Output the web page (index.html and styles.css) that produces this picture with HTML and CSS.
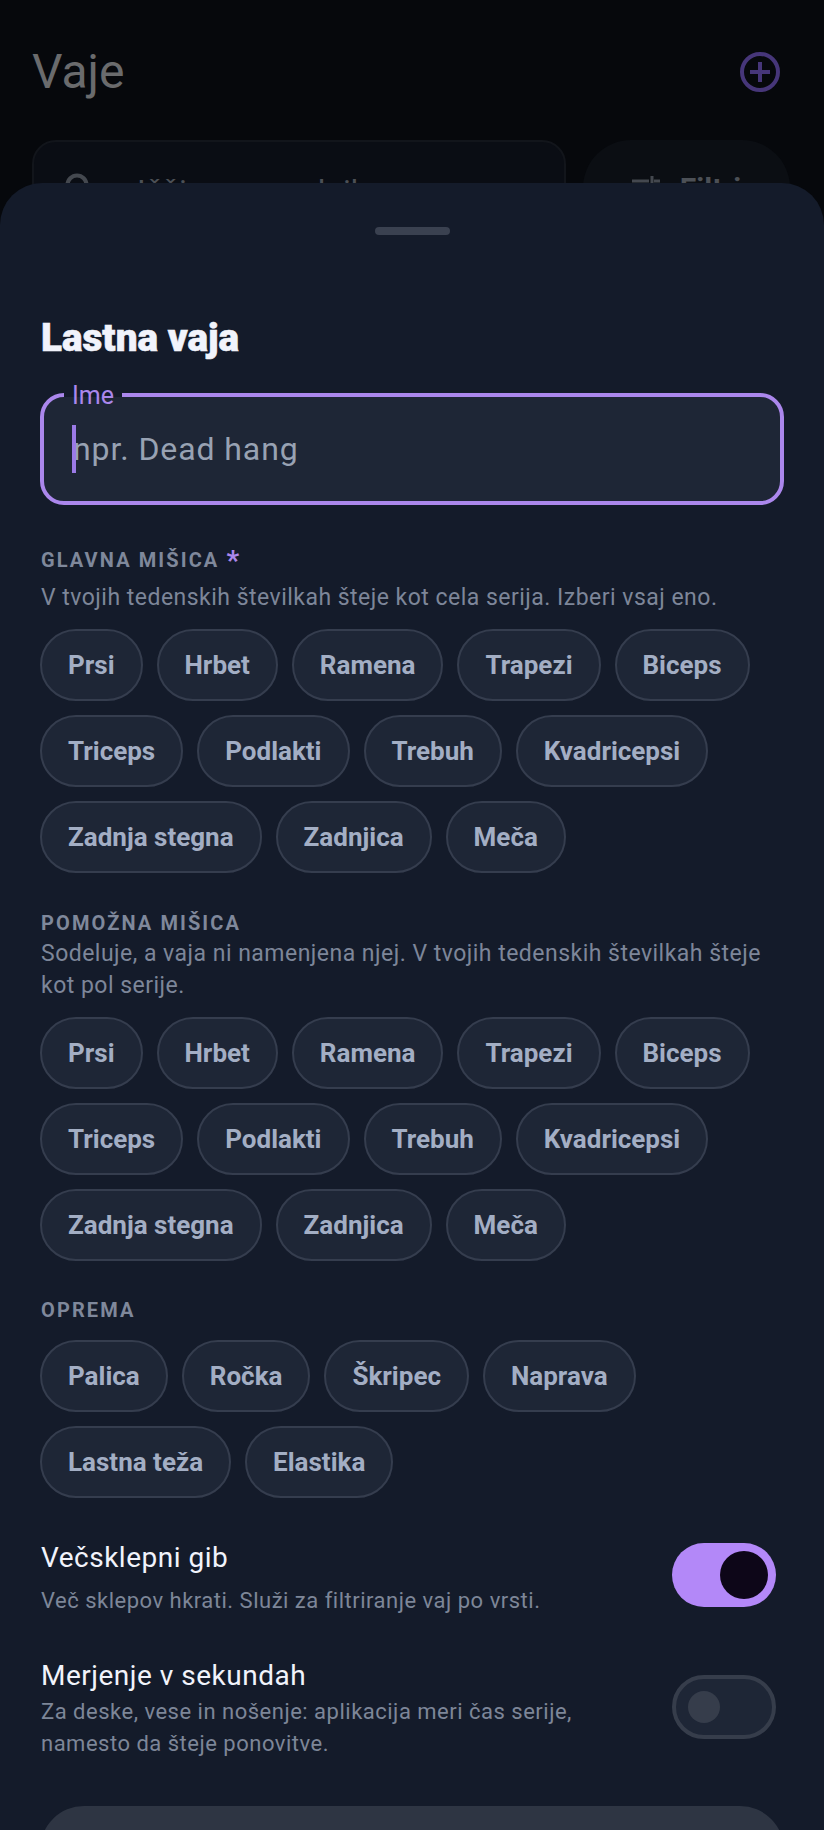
FILE: index.html
```html
<!DOCTYPE html>
<html lang="en">
<head>
  <meta charset="UTF-8" />
  <meta name="viewport" content="width=device-width, initial-scale=1.0" />
  <title>Vaje</title>
  <link rel="stylesheet" href="styles.css">
</head>
<body>
  <!-- page behind the sheet -->
  <div class="page">
    <header class="page-head">
      <h1>Vaje</h1>
      <svg class="add-icon" width="44" height="44" viewBox="0 0 44 44" fill="none" stroke="#463679" stroke-width="4">
        <circle cx="22" cy="22" r="18" />
        <path d="M22 12v20M12 22h20" />
      </svg>
    </header>
    <div class="search-row">
      <div class="search">
        <svg class="search-icon" width="28" height="28" viewBox="0 0 28 28" fill="none" stroke="#44484f" stroke-width="4">
          <circle cx="12" cy="12" r="9.5" />
        </svg>
        <span>Išči po nazadnih</span>
      </div>
      <div class="filter">
        <svg width="28" height="28" viewBox="0 0 28 28" fill="none" stroke="#44484f" stroke-width="3">
          <path d="M0 6h17M22 6h6M20 1v10" />
        </svg>
        <span>Filtri</span>
      </div>
    </div>
  </div>

  <!-- bottom sheet -->
  <div class="sheet">
    <div class="handle"></div>
    <h2 class="sheet-title">Lastna vaja</h2>

    <div class="field">
      <span class="field-label">Ime</span>
      <span class="caret"></span>
      <span class="placeholder">npr. Dead hang</span>
    </div>

    <div class="group group-main">
      <div class="group-label">GLAVNA MIŠICA <span class="req">*</span></div>
      <p class="group-hint">V tvojih tedenskih številkah šteje kot cela serija. Izberi vsaj eno.</p>
      <div class="chips">
        <button class="chip">Prsi</button>
        <button class="chip">Hrbet</button>
        <button class="chip">Ramena</button>
        <button class="chip">Trapezi</button>
        <button class="chip">Biceps</button>
        <button class="chip">Triceps</button>
        <button class="chip">Podlakti</button>
        <button class="chip">Trebuh</button>
        <button class="chip">Kvadricepsi</button>
        <button class="chip">Zadnja stegna</button>
        <button class="chip">Zadnjica</button>
        <button class="chip">Meča</button>
      </div>
    </div>

    <div class="group group-side">
      <div class="group-label">POMOŽNA MIŠICA</div>
      <p class="group-hint">Sodeluje, a vaja ni namenjena njej. V tvojih tedenskih številkah šteje kot pol serije.</p>
      <div class="chips">
        <button class="chip">Prsi</button>
        <button class="chip">Hrbet</button>
        <button class="chip">Ramena</button>
        <button class="chip">Trapezi</button>
        <button class="chip">Biceps</button>
        <button class="chip">Triceps</button>
        <button class="chip">Podlakti</button>
        <button class="chip">Trebuh</button>
        <button class="chip">Kvadricepsi</button>
        <button class="chip">Zadnja stegna</button>
        <button class="chip">Zadnjica</button>
        <button class="chip">Meča</button>
      </div>
    </div>

    <div class="group group-gear">
      <div class="group-label">OPREMA</div>
      <div class="chips">
        <button class="chip">Palica</button>
        <button class="chip">Ročka</button>
        <button class="chip">Škripec</button>
        <button class="chip">Naprava</button>
        <button class="chip">Lastna teža</button>
        <button class="chip">Elastika</button>
      </div>
    </div>

    <div class="setting setting-first">
      <div class="setting-text">
        <div class="setting-name">Večsklepni gib</div>
        <p class="setting-hint hint-gap">Več sklepov hkrati. Služi za filtriranje vaj po vrsti.</p>
      </div>
      <div class="toggle on"><span class="thumb"></span></div>
    </div>

    <div class="setting setting-second">
      <div class="setting-text">
        <div class="setting-name">Merjenje v sekundah</div>
        <p class="setting-hint">Za deske, vese in nošenje: aplikacija meri čas serije, namesto da šteje ponovitve.</p>
      </div>
      <div class="toggle"><span class="thumb"></span></div>
    </div>

    <div class="save-btn"></div>
  </div>
</body>
</html>
```

FILE: styles.css
```css
html, body {
  margin: 0;
  padding: 0;
  height: 1830px;
  overflow: hidden;
  background: #06080c;
  font-family: Roboto, sans-serif;
}
.page {
  padding: 39px 33px 0 32px;
}
.page-head {
  display: flex;
  justify-content: space-between;
  align-items: center;
  height: 64px;
  padding-right: 9px;
}
.page-head h1 {
  margin: 0;
  font-size: 48px;
  font-weight: 400;
  color: #6a6b6d;
}
.add-icon {
  margin-top: 2px;
}
.search-row {
  display: flex;
  gap: 17px;
  margin-top: 37px;
}
.search, .filter {
  display: flex;
  align-items: center;
  height: 102px;
  box-sizing: border-box;
  color: #4c5056;
  font-size: 32px;
}
.search {
  width: 534px;
  border: 2px solid #12151b;
  border-radius: 24px;
  background: #0a0d14;
  padding: 0 32px 0 31px;
  gap: 44px;
}
.search-icon {
  margin-bottom: 8px;
}
.filter {
  width: 207px;
  border-radius: 48px;
  background: #0b0e13;
  justify-content: center;
  gap: 20px;
  padding-bottom: 5px;
  font-size: 30px;
  font-weight: 700;
}

.sheet {
  position: absolute;
  left: 0;
  right: 0;
  top: 183px;
  height: 1700px;
  box-sizing: border-box;
  padding: 0 41px;
  background: #141b2a;
  border-radius: 42px 42px 0 0;
}
.handle {
  width: 75px;
  height: 8px;
  margin: 44px auto 0;
  border-radius: 4px;
  background: #3a4150;
}
.sheet-title {
  margin: 79px 0 0;
  font-size: 38.7px;
  line-height: 48px;
  font-weight: 900;
  -webkit-text-stroke: 0.6px #f1f3fb;
  color: #f1f3fb;
}
.field {
  position: relative;
  display: flex;
  align-items: center;
  height: 112px;
  box-sizing: border-box;
  margin: 31px 0 0 -1px;
  padding-left: 29px;
  width: 744px;
  border: 4px solid #ab87ec;
  border-radius: 24px;
  background: #1e2636;
}
.field-label {
  position: absolute;
  left: 20px;
  top: -15px;
  padding: 0 8px 0 8px;
  font-size: 25px;
  line-height: 28px;
  color: #ab87ec;
  background: linear-gradient(to bottom, #141b2a 15px, #1e2636 15px);
}
.caret {
  position: absolute;
  left: 28px;
  top: 28px;
  width: 4px;
  height: 48px;
  background: #9b7ae6;
}
.placeholder {
  font-size: 32px;
  letter-spacing: 0.9px;
  color: #98a2b3;
}
.group-label {
  font-size: 20px;
  line-height: 24px;
  font-weight: 700;
  letter-spacing: 2.1px;
  color: #7f889b;
}
.req {
  color: #ab87ec;
  font-size: 28px;
  font-weight: 700;
  line-height: 20px;
  vertical-align: -3px;
}
.group-hint {
  margin: 0;
  font-size: 23px;
  line-height: 32px;
  letter-spacing: 0.48px;
  color: #7d8699;
}
.group-main { margin-top: 43px; }
.group-main .group-hint { margin-top: 10px; }
.group-side { margin-top: 38px; }
.group-side .group-hint { margin-top: 3px; }
.group-gear { margin-top: 37px; }
.chips {
  display: flex;
  flex-wrap: wrap;
  gap: 14px;
  margin: 15px 0 0 -1px;
}
.group-gear .chips { margin-top: 18px; }
.chip {
  height: 72px;
  box-sizing: border-box;
  padding: 0 26px;
  border: 2px solid #353d4e;
  border-radius: 36px;
  background: #1e2636;
  font-family: Roboto, sans-serif;
  font-size: 26px;
  font-weight: 700;
  color: #a3aec4;
}
.setting {
  display: flex;
  justify-content: space-between;
  align-items: center;
  width: 735px;
}
.setting-first { margin-top: 36px; }
.setting-second { margin-top: 41px; }
.setting-text { width: 580px; }
.setting-first .setting-text { padding-top: 6px; }
.setting-name {
  font-size: 28px;
  line-height: 36px;
  letter-spacing: 0.5px;
  color: #f1f3fb;
}
.setting-hint {
  margin: 2px 0 0;
  font-size: 22px;
  line-height: 32px;
  letter-spacing: 0.5px;
  color: #7d8698;
}
.setting-first .hint-gap { margin-top: 9px; }
.toggle {
  position: relative;
  width: 104px;
  height: 64px;
  margin-bottom: 4px;
  box-sizing: border-box;
  border: 4px solid #363d4b;
  border-radius: 32px;
  background: #1e2636;
}
.toggle .thumb {
  position: absolute;
  left: 12px;
  top: 12px;
  width: 32px;
  height: 32px;
  border-radius: 50%;
  background: #363d4b;
}
.toggle.on {
  margin-bottom: 2px;
  border: none;
  background: #b388f8;
}
.toggle.on .thumb {
  left: 48px;
  top: 8px;
  width: 48px;
  height: 48px;
  background: #0d0618;
}
.save-btn {
  height: 112px;
  margin: 46px 0 0 -1px;
  width: 744px;
  border-radius: 44px;
  background: #2e3543;
}
```
